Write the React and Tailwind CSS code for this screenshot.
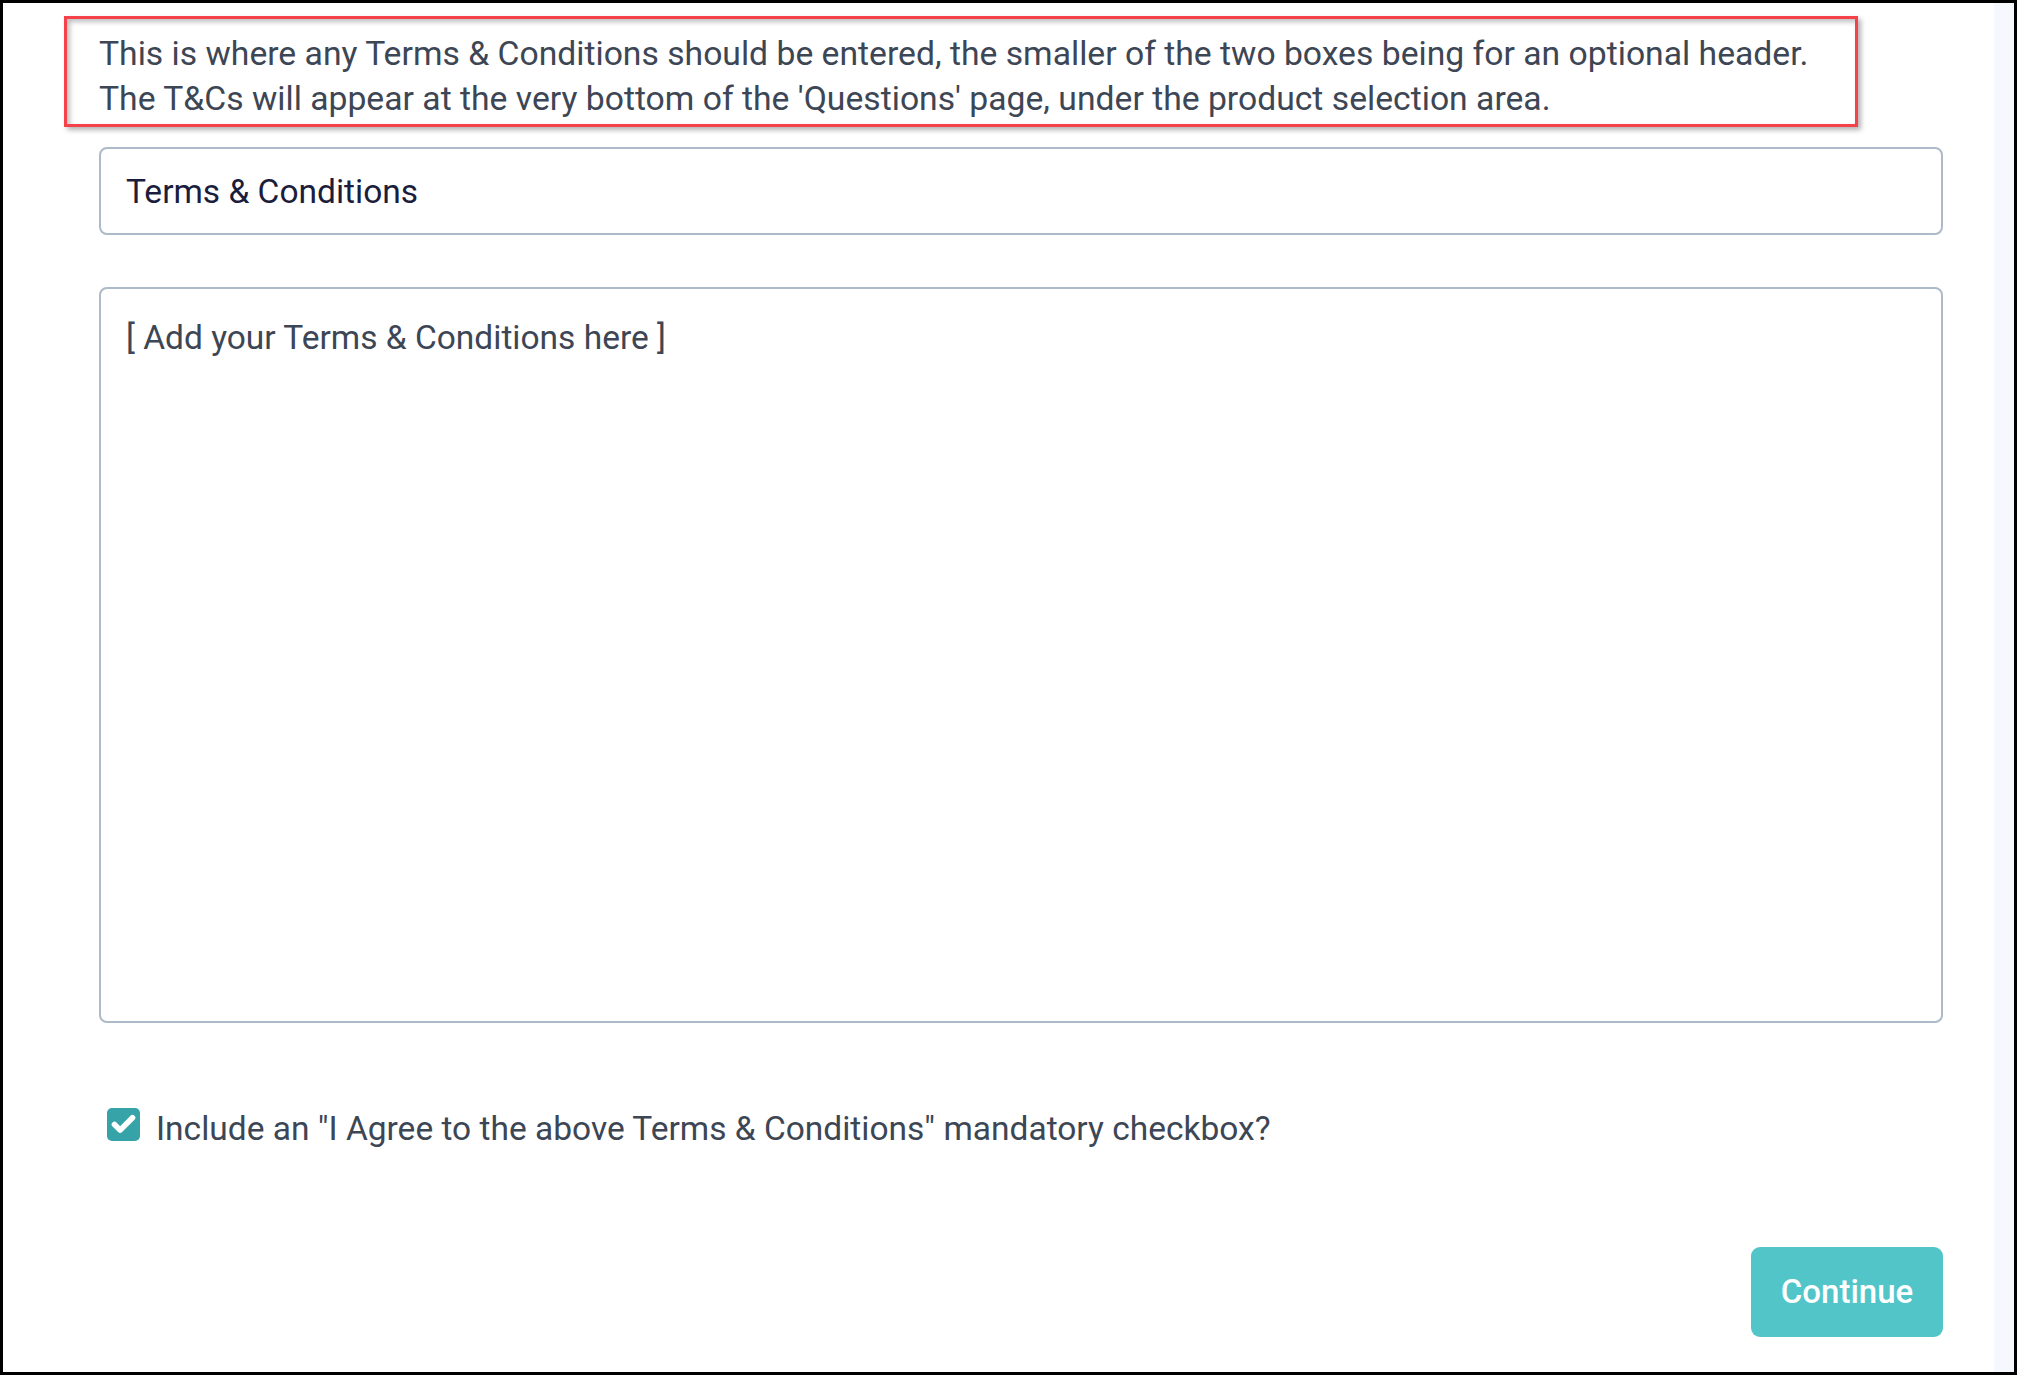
import React from "react";
import { Check } from "lucide-react";

export default function App() {
  return (
    <div className="flex h-[1375px] w-[2017px] bg-black p-[3px] font-['Roboto',sans-serif]">
      <div className="flex flex-1 flex-col bg-white pl-[96px] pr-[51px]">
        {/* annotation */}
        <div className="-ml-[35px] mt-[13px] w-[1794px] border-[3px] border-[#f5424a] pb-[3px] pl-[32px] pt-[12px] text-[33.7px] leading-[45px] text-[#3d4654] shadow-[3px_3px_5px_rgba(0,0,0,0.3),inset_3px_3px_5px_rgba(0,0,0,0.25)]">
          <p>
            This is where any Terms &amp; Conditions should be entered, the smaller of the two boxes being for an optional header.
          </p>
          <p>The T&amp;Cs will appear at the very bottom of the 'Questions' page, under the product selection area.</p>
        </div>

        <input
          defaultValue="Terms & Conditions"
          className="mt-[20px] h-[88px] w-full rounded-[8px] border-2 border-[#adbac8] px-[25px] text-[33.5px] text-[#1a1d3b] outline-none"
        />

        <textarea
          placeholder="[ Add your Terms & Conditions here ]"
          className="mt-[52px] h-[736px] w-full resize-none rounded-[8px] border-2 border-[#adbac8] px-[25px] pt-[26px] text-[33.5px] leading-[45px] text-[#3d4654] outline-none placeholder:text-[#3d4654]"
        />

        <label className="ml-[8px] mt-[83px] flex items-center gap-[16px]">
          <span className="mb-[8px] flex h-[33px] w-[33px] items-center justify-center rounded-[5px] bg-[#35a3a7] text-white">
            <Check className="h-[27px] w-[27px]" strokeWidth={5} />
          </span>
          <span className="text-[33.5px] leading-[45px] text-[#3d4654]">
            Include an "I Agree to the above Terms &amp; Conditions" mandatory checkbox?
          </span>
        </label>

        <div className="mt-[96px] flex justify-end">
          <button className="h-[90px] w-[192px] rounded-[9px] bg-[#52c5c9] text-[33px] font-medium text-white">
            Continue
          </button>
        </div>
      </div>
      <div className="w-[20px] bg-[#f5f8fc]" />
    </div>
  );
}
